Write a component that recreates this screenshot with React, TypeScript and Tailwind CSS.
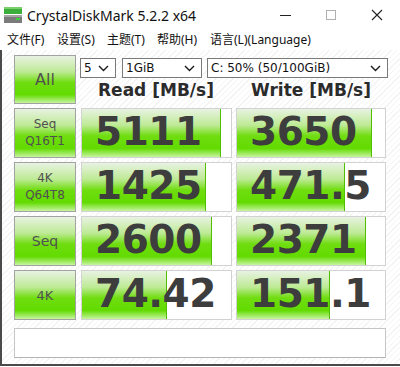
import React from "react";

const rows = [
  { l1: "Seq", l2: "Q16T1", size: "text-[12px]", read: "5111", rp: 93, write: "3650", wp: 91 },
  { l1: "4K", l2: "Q64T8", size: "text-[12px]", read: "1425", rp: 83, write: "471.5", wp: 73 },
  { l1: "Seq", size: "text-[14px]", read: "2600", rp: 87, write: "2371", wp: 87 },
  { l1: "4K", size: "text-[13px]", read: "74.42", rp: 57, write: "151.1", wp: 63 },
];

const green =
  "bg-[linear-gradient(to_bottom,#e8f2e2_0%,#bdea94_34%,#70dd10_56%,#62db00_82%,#c6f4a0_100%)]";

function Combo({ text, w }: { text: string; w: string }) {
  return (
    <div className={`${w} h-[20px] border border-[#7a7a7a] bg-white flex items-center justify-between pl-[3px] pr-[6px]`}>
      <span className="text-[12px] text-[#111] font-['DejaVu_Sans',sans-serif] leading-none">{text}</span>
      <svg width="11" height="7" viewBox="0 0 11 7">
        <polyline points="1,1 5.5,5.5 10,1" fill="none" stroke="#1a1a1a" strokeWidth="1.4" />
      </svg>
    </div>
  );
}

function ValueCell({ value, pct, w }: { value: string; pct: number; w: string }) {
  return (
    <div className={`${w} h-full relative border border-[#d2d2d2] bg-white overflow-hidden`}>
      <div className={`absolute left-0 top-0 bottom-0 ${green} border-r border-[#4fbf00]`} style={{ width: `${pct}%` }} />
      <div className="relative h-full flex items-center pl-[13px] pb-[3px] text-[39px] tracking-[-0.5px] font-bold text-[#3d3d3d] leading-none font-['DejaVu_Sans',sans-serif]">
        {value}
      </div>
    </div>
  );
}

export default function App() {
  return (
    <div className="w-[400px] h-[367px] bg-white overflow-hidden font-['DejaVu_Sans',sans-serif]">
      {/* title bar */}
      <div className="h-[30px] flex items-center">
        <svg width="20" height="17" viewBox="0 0 20 17" className="ml-[3px]">
          <rect x="1" y="0" width="18" height="7" fill="#3cae3c" />
          <rect x="1" y="0" width="18" height="2" fill="#7ccf6c" />
          <rect x="1" y="8" width="18" height="8" fill="#7b7b7b" />
          <rect x="1" y="8" width="18" height="2" fill="#a5a5a5" />
          <rect x="13" y="11" width="4" height="2" fill="#39d439" />
        </svg>
        <span className="ml-[4px] text-[14px] text-[#111] font-['Noto_Sans',sans-serif]">CrystalDiskMark 5.2.2 x64</span>
        <div className="ml-auto flex items-center">
          <div className="w-[46px] flex justify-center">
            <div className="w-[11px] h-px bg-[#222]" />
          </div>
          <div className="w-[46px] flex justify-center">
            <div className="w-[10px] h-[10px] border border-[#b0b0b0]" />
          </div>
          <div className="w-[46px] flex justify-center">
            <svg width="12" height="12" viewBox="0 0 12 12">
              <path d="M1 1L11 11M11 1L1 11" stroke="#222" strokeWidth="1.1" />
            </svg>
          </div>
        </div>
      </div>

      {/* menu */}
      <div className="h-[20px] flex items-center text-[12px] text-[#111] font-['Noto_Sans','Noto_Sans_CJK_SC',sans-serif] pl-[7px]">
        <span className="w-[50px]">文件(F)</span>
        <span className="w-[50px]">设置(S)</span>
        <span className="w-[50px]">主题(T)</span>
        <span className="w-[53px]">帮助(H)</span>
        <span>语言(L)(Language)</span>
      </div>

      {/* client */}
      <div className="h-[316px] border-l-2 border-b-2 border-[#4a4a4a] bg-[repeating-linear-gradient(135deg,#ffffff_0px,#ffffff_3px,#f3f3f3_3px,#f3f3f3_4px)] pl-[12px] pt-[5px] flex flex-col">
        <div className="flex h-[49px]">
          <div className={`w-[62px] h-full border border-[#a2a2a2] ${green} flex items-center justify-center text-[16px] text-[#505050]`}>
            All
          </div>
          <div className="ml-[4px] flex flex-col">
            <div className="flex mt-[3px] gap-[6px]">
              <Combo text="5" w="w-[36px]" />
              <Combo text="1GiB" w="w-[80px]" />
              <Combo text="C: 50% (50/100GiB)" w="w-[181px] ml-[-1px]" />
            </div>
            <div className="flex flex-1 items-center">
              <div className="w-[152px] text-center text-[17px] font-bold text-[#2b2b2b]">Read [MB/s]</div>
              <div className="ml-[4px] w-[150px] text-center text-[17px] font-bold text-[#2b2b2b]">Write [MB/s]</div>
            </div>
          </div>
        </div>

        {rows.map((r, i) => (
          <div key={i} className="flex h-[50px] mt-[4px]">
            <div className={`w-[62px] h-full border border-[#a2a2a2] ${green} flex flex-col items-center justify-center ${r.size} leading-[17px] text-[#505050]`}>
              <span>{r.l1}</span>
              {r.l2 && <span>{r.l2}</span>}
            </div>
            <div className="ml-[5px] h-full flex">
              <ValueCell value={r.read} pct={r.rp} w="w-[151px]" />
              <div className="ml-[4px] h-full">
                <ValueCell value={r.write} pct={r.wp} w="w-[150px]" />
              </div>
            </div>
          </div>
        ))}

        <div className="mt-[8px] w-[372px] h-[30px] border border-[#c6c6c6] border-b-[#b4b4b4] bg-white" />
      </div>
    </div>
  );
}
